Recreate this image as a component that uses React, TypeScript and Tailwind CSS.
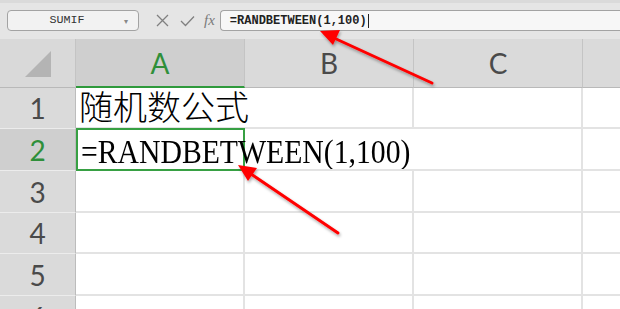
import React from "react";

const hdrFont = { fontFamily: "Lato, 'Liberation Sans', sans-serif" };
const cellFont = { fontFamily: "'Liberation Serif', 'Noto Sans CJK SC', serif" };
const monoFont = { fontFamily: "'Liberation Mono', 'Noto Sans CJK SC', monospace" };

const rowHeights = [41, 42, 42, 41, 42, 42];

function RowHead({ n, h, active }: { n: number; h: number; active?: boolean }) {
  return (
    <div
      className={`flex items-center justify-center border-r border-b border-r-[#bcbcbc] border-b-[#ececec] text-[28px] ${
        active ? "bg-[#cfcfcf] text-[#2f8f3a]" : "bg-[#dadada] text-[#4a4a4a]"
      }`}
      style={{ ...hdrFont, height: h }}
    >
      {n}
    </div>
  );
}

function Cell({ h, noRight, children, className = "" }: { h: number; noRight?: boolean; children?: React.ReactNode; className?: string }) {
  return (
    <div
      className={`relative border-b-2 border-b-[#e3e3e3] ${noRight ? "" : "border-r-2 border-r-[#e3e3e3]"} ${className}`}
      style={{ height: h }}
    >
      {children}
    </div>
  );
}

export default function App() {
  return (
    <div className="relative w-[620px] h-[309px] overflow-hidden bg-white">
      {/* formula toolbar */}
      <div className="h-[39px] bg-[#e5e5e5] border-t-[3px] border-t-[#dadada] flex items-start pt-[7px]">
        <div className="ml-[7px] w-[132px] h-[21px] rounded-[4px] border border-[#a3a3a3] bg-[#f2f2f2] flex items-center">
          <span className="flex-1 text-center text-[11.7px] text-[#333] pl-[2px]" style={monoFont}>
            SUMIF
          </span>
          <span className="w-[12px] text-[8px] text-[#888] mr-[2px]">▾</span>
        </div>
        <div className="ml-[17px] h-[21px] flex items-center gap-[11px] text-[#7a7a7a]">
          <svg width="13" height="13" viewBox="0 0 13 13">
            <path d="M1 1 L12 12 M12 1 L1 12" stroke="#808080" strokeWidth="1.3" fill="none" />
          </svg>
          <svg width="15" height="12" viewBox="0 0 15 12">
            <path d="M1 6 L5.5 10.5 L14 1.5" stroke="#808080" strokeWidth="1.3" fill="none" />
          </svg>
          <span className="italic text-[15px] leading-none -ml-[2px]" style={{ fontFamily: "'Liberation Serif', serif" }}>
            fx
          </span>
        </div>
        <div className="ml-[5px] flex-1 h-[21px] rounded-l-[4px] border border-r-0 border-[#a3a3a3] bg-[#f7f7f7] flex items-center pl-[9px]">
          <span className="text-[12px] font-bold text-[#222]" style={monoFont}>
            =RANDBETWEEN(1,100)
          </span>
          <span className="ml-[1px] w-px h-[14px] bg-[#222]" />
        </div>
      </div>

      {/* column headers */}
      <div className="grid grid-cols-[76px_169px_169px_169px_1fr] h-[49px]" style={hdrFont}>
        <div className="bg-[#d9d9d9] border-r border-r-[#c4c4c4] border-b border-b-[#b9b9b9] flex items-center justify-center">
          <svg width="28" height="28" viewBox="0 0 28 28" className="ml-[2px] mt-[2px]">
            <path d="M26 1 L26 27 L0 27 Z" fill="#b4b4b4" />
          </svg>
        </div>
        <div className="bg-[#cfcfcf] border-r border-r-[#c4c4c4] border-b-2 border-b-[#2f9a3c] flex items-center justify-center text-[28px] text-[#2f8f3a]">
          A
        </div>
        <div className="bg-[#dadada] border-r border-r-[#c4c4c4] border-b border-b-[#b9b9b9] flex items-center justify-center text-[28px] text-[#4a4a4a]">
          B
        </div>
        <div className="bg-[#dadada] border-r border-r-[#c4c4c4] border-b border-b-[#b9b9b9] flex items-center justify-center text-[28px] text-[#4a4a4a]">
          C
        </div>
        <div className="bg-[#dadada] border-b border-b-[#b9b9b9]" />
      </div>

      {/* rows */}
      <div className="grid grid-cols-[76px_169px_169px_169px_1fr]">
        {rowHeights.map((h, i) => {
          const n = i + 1;
          return (
            <React.Fragment key={n}>
              <RowHead n={n} h={h} active={n === 2} />
              {n === 1 ? (
                <Cell h={h} noRight>
                  <span
                    className="absolute left-[3px] bottom-[1px] whitespace-nowrap text-[34px] leading-none text-black font-light"
                    style={cellFont}
                  >
                    随机数公式
                  </span>
                </Cell>
              ) : n === 2 ? (
                <div className="relative border-2 border-[#37a043] -mt-px" style={{ height: h + 1 }}>
                  <span
                    className="absolute left-[3px] bottom-0 whitespace-nowrap text-[33px] leading-none text-black origin-left scale-x-[0.9]"
                    style={cellFont}
                  >
                    =RANDBETWEEN(1,100)
                  </span>
                </div>
              ) : (
                <Cell h={h} />
              )}
              <Cell h={h} noRight={n === 2} />
              <Cell h={h} />
              <Cell h={h} noRight />
            </React.Fragment>
          );
        })}
      </div>

      {/* annotation arrows */}
      <svg className="absolute inset-0 pointer-events-none" width="620" height="309">
        <defs>
          <filter id="sh" x="-20%" y="-20%" width="140%" height="140%">
            <feDropShadow dx="1" dy="2" stdDeviation="1.5" floodColor="#000" floodOpacity="0.35" />
          </filter>
        </defs>
        <g filter="url(#sh)">
          <line x1="432" y1="83" x2="334" y2="38" stroke="#ff0000" strokeWidth="3" strokeLinecap="round" />
          <path d="M320 31 L340 30 L333 45 Z" fill="#ff0000" />
          <line x1="338" y1="233" x2="251" y2="174" stroke="#ff0000" strokeWidth="3" strokeLinecap="round" />
          <path d="M238 165 L257 168 L248 181 Z" fill="#ff0000" />
        </g>
      </svg>
    </div>
  );
}
